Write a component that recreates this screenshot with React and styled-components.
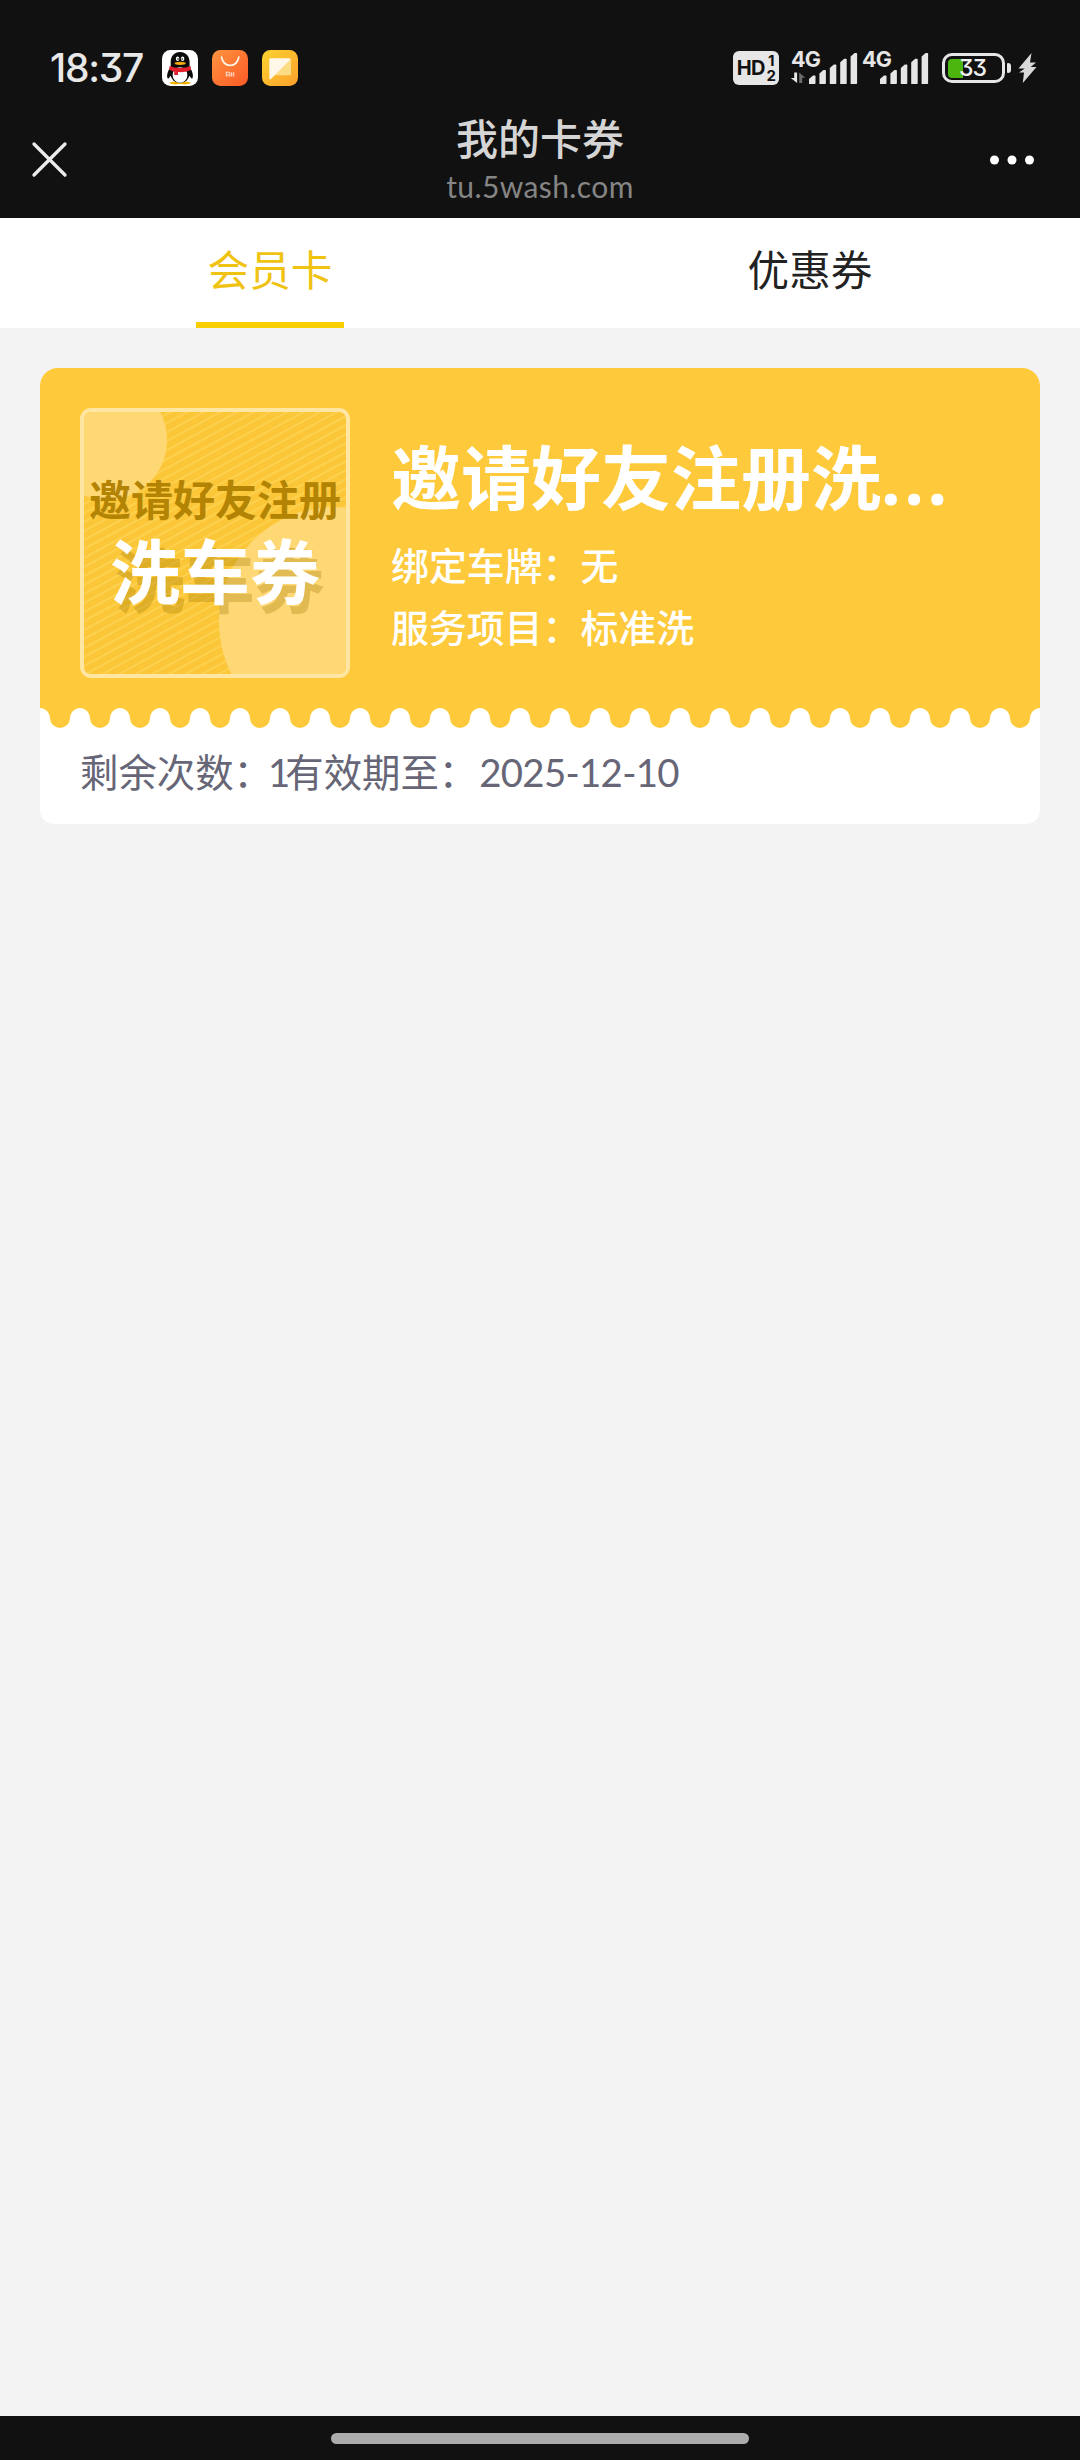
import React from "react";
import styled, { createGlobalStyle } from "styled-components";

const GlobalStyle = createGlobalStyle`
  *, *::before, *::after { box-sizing: border-box; }
  html, body { margin: 0; padding: 0; background: #f3f3f3; }
  body {
    font-family: Lato, "Noto Sans CJK SC", sans-serif;
    -webkit-font-smoothing: antialiased;
  }
`;

const Screen = styled.div`
  display: flex;
  flex-direction: column;
  width: 1080px;
  height: 2460px;
  overflow: hidden;
  background: #f3f3f3;
`;

const Header = styled.header`
  display: flex;
  flex-direction: column;
  height: 218px;
  background: #111;
`;

const StatusBar = styled.div`
  display: flex;
  align-items: center;
  justify-content: space-between;
  height: 106px;
  padding: 30px 43px 0 50px;
`;

const StatusGroup = styled.div`
  display: flex;
  align-items: center;
  height: 36px;
`;

const Clock = styled.div`
  width: 112px;
  font-family: Inter, sans-serif;
  font-size: 39px;
  font-weight: 500;
  line-height: 38px;
  letter-spacing: -1.3px;
  white-space: nowrap;
  font-feature-settings: "cv09";
  color: #e8e8e8;
`;

const AppIcons = styled.div`
  display: flex;
  gap: 14px;
`;

const Glyph = styled.svg`
  display: block;
  flex: none;
`;

const HdBadge = styled.div`
  display: flex;
  align-items: center;
  justify-content: center;
  width: 46px;
  height: 34px;
  margin-right: 11px;
  border-radius: 6px;
  background: #e6e6e6;
  color: #111;
  font-family: Inter, sans-serif;
  font-size: 20px;
  font-weight: 700;
  line-height: 34px;
  letter-spacing: -0.8px;
`;

const HdLines = styled.span`
  display: flex;
  flex-direction: column;
  align-items: center;
  margin-left: 2px;
  font-size: 15px;
  line-height: 15px;
`;

const Network = styled.div`
  display: flex;
  flex-direction: column;
  width: ${(p) => p.$width}px;
  height: 36px;
`;

const NetworkType = styled.span`
  height: 18px;
  padding-left: 1px;
  font-family: Inter, sans-serif;
  font-size: 21.5px;
  font-weight: 700;
  line-height: 18px;
  letter-spacing: -0.9px;
  color: #e6e6e6;
`;

const SignalCluster = styled.div`
  display: grid;
  width: ${(p) => p.$width}px;
  margin-right: ${(p) => p.$after}px;
  > * { grid-area: 1 / 1; }
`;

const Battery = styled.div`
  display: flex;
  align-items: center;
  width: 63px;
  height: 30px;
  padding: 0 3px;
  border: 3.5px solid #e6e6e6;
  border-radius: 10px;
`;

const BatteryFill = styled.div`
  width: 15px;
  height: 19px;
  border-radius: 4px 0 0 4px;
  background: #4cb50e;
`;

const BatteryLevel = styled.span`
  margin-left: -4px;
  font-family: Inter, sans-serif;
  font-size: 23px;
  font-weight: 500;
  line-height: 24px;
  letter-spacing: -0.9px;
  font-feature-settings: "cv09";
  color: #f0f0f0;
`;

const BatteryCap = styled.div`
  width: 4px;
  height: 10px;
  margin: 0 7px 0 2px;
  border-radius: 1px 3px 3px 1px;
  background: #e6e6e6;
`;

const NavBar = styled.div`
  display: grid;
  grid-template-columns: 100px 1fr 100px;
  height: 112px;
`;

const NavButton = styled.button`
  display: flex;
  align-items: center;
  justify-content: ${(p) => p.$side};
  height: 107px;
  padding: 0 44px 0 31px;
  border: 0;
  background: transparent;
`;

const NavTitle = styled.div`
  display: flex;
  flex-direction: column;
  align-items: center;
  padding-top: 7px;
`;

const PageName = styled.div`
  height: 56px;
  font-size: 42px;
  font-weight: 500;
  line-height: 52px;
  color: #d5d5d5;
`;

const PageHost = styled.div`
  height: 34px;
  font-size: 30px;
  line-height: 34px;
  letter-spacing: 0.4px;
  color: #858585;
`;

const Tabs = styled.nav`
  display: grid;
  grid-template-columns: 1fr 1fr;
  height: 110px;
  background: #fff;
`;

const Tab = styled.div`
  display: flex;
  align-items: center;
  justify-content: center;
  width: 148px;
  height: 110px;
  margin: 0 auto;
  border-bottom: 6px solid ${(p) => (p.$active ? "#fbce00" : "transparent")};
  font-size: 41.6px;
  line-height: 60px;
  white-space: nowrap;
  color: ${(p) => (p.$active ? "#f0c313" : "#222")};
`;

const Content = styled.main`
  flex: 1;
  padding: 40px;
`;

const Card = styled.article`
  display: flex;
  flex-direction: column;
  height: 456px;
  border-radius: 18px 18px 14px 14px;
  overflow: hidden;
  background: #fff;
`;

const CardTop = styled.div`
  display: flex;
  gap: 40px;
  height: 340px;
  padding: 40px 40px 30px;
  background: #fec93a;
`;

const Cover = styled.div`
  position: relative;
  display: flex;
  flex: none;
  flex-direction: column;
  align-items: center;
  width: 270px;
  height: 270px;
  padding-top: 60px;
  border: 4px solid #ffe6a3;
  border-radius: 11px;
  overflow: hidden;
  background: #fbc739;
`;

const CoverArt = styled.svg`
  position: absolute;
  inset: 0;
`;

const CoverCaption = styled.div`
  position: relative;
  height: 56px;
  font-size: 42px;
  font-weight: 700;
  line-height: 56px;
  white-space: nowrap;
  color: #b38304;
`;

const CoverTitle = styled.div`
  position: relative;
  height: 80px;
  margin-top: 4px;
  font-size: 70px;
  font-weight: 700;
  line-height: 80px;
  white-space: nowrap;
  color: #fff;
  text-shadow: 5px 9px 0 rgba(160, 115, 0, 0.3);
`;

const Info = styled.div`
  display: flex;
  flex-direction: column;
  min-width: 0;
  padding: 22px 0 0 1px;
  color: #fff;
`;

const InfoTitle = styled.h2`
  height: 96px;
  margin: 0 0 8px;
  font-size: 70px;
  font-weight: 700;
  line-height: 96px;
  white-space: nowrap;
`;

const Dots = styled.span`
  font-family: "Noto Sans", sans-serif;
  letter-spacing: 3.6px;
`;

const InfoRow = styled.div`
  height: 62px;
  font-size: 37.9px;
  font-weight: 500;
  line-height: 63px;
  white-space: nowrap;
`;

const Scallop = styled.svg`
  display: block;
  flex: none;
`;

const CardFooter = styled.div`
  display: flex;
  align-items: center;
  height: 88px;
  padding-left: 40px;
  font-size: 38.4px;
  line-height: 60px;
  white-space: nowrap;
  color: #666677;
`;

const Figures = styled.span`
  margin-left: ${(p) => p.$shift}px;
  letter-spacing: ${(p) => p.$tracking}px;
`;

const GestureBar = styled.footer`
  display: flex;
  align-items: center;
  justify-content: center;
  height: 44px;
  background: #111;
`;

const GesturePill = styled.div`
  width: 418px;
  height: 11px;
  border-radius: 6px;
  background: #acacac;
`;

function PenguinIcon() {
  return (
    <Glyph width="36" height="36" viewBox="0 0 36 36">
      <rect width="36" height="36" rx="8.5" fill="#fff" />
      <ellipse cx="13.5" cy="33" rx="5.8" ry="1.5" fill="#f5b400" />
      <ellipse cx="22.8" cy="33" rx="5.8" ry="1.5" fill="#f5b400" />
      <path d="M8.500 17C5.500 21.500 4.300 26 5.800 28.500c.8.500 1.900-1.300 2.500-2.500h19.500c.6 1.200 1.700 3 2.500 2.500 1.400-2.500.3-7-2.700-11.500z" fill="#0b0b0b" />
      <path d="M18 2c-5.600 0-9.300 4.300-9.300 10v7h18.900v-7C27.600 6.300 23.700 2 18 2z" fill="#0b0b0b" />
      <circle cx="18" cy="23.300" r="9.700" fill="#0b0b0b" />
      <ellipse cx="18" cy="25" rx="7.400" ry="7.800" fill="#fff" />
      <ellipse cx="15.600" cy="8.800" rx="1.700" ry="2.300" fill="#fff" />
      <ellipse cx="20.600" cy="8.800" rx="1.700" ry="2.300" fill="#fff" />
      <circle cx="16" cy="9" r="0.800" fill="#111" />
      <circle cx="20.300" cy="9" r="0.800" fill="#111" />
      <ellipse cx="18.200" cy="13.300" rx="5.600" ry="1.600" fill="#f4aa13" />
      <path d="M7.600 16c6 2.600 15 2.600 21 0l.4 4c-4.500 2-8.800 2.300-13 2.100v3h-3.800V21.400c-1.700-.3-3.400-.8-5-1.600z" fill="#e0202c" />
    </Glyph>
  );
}

function StoreIcon() {
  return (
    <Glyph width="36" height="36" viewBox="0 0 36 36">
      <defs>
        <linearGradient id="store" x1="0" y1="0" x2="1" y2="1">
          <stop offset="0" stopColor="#ff9440" />
          <stop offset="1" stopColor="#fb5a26" />
        </linearGradient>
      </defs>
      <rect width="36" height="36" rx="8.500" fill="url(#store)" />
      <path d="M9.500 7c1 5.300 4.300 8.300 8.700 8.300S25.800 12.300 26.800 7" fill="none" stroke="#fff3e6" strokeWidth="1.700" strokeLinecap="round" />
      <path d="M14.300 26.500v-4.200h2.400c.8 0 1.200.4 1.200 1.200v3M16.100 24v2.500M19.700 22.300v4.200M21.700 22.300v4.200" fill="none" stroke="#ffe0d0" strokeWidth="1.100" />
    </Glyph>
  );
}

function NotesIcon() {
  return (
    <Glyph width="36" height="36" viewBox="0 0 36 36">
      <defs>
        <linearGradient id="notes" x1="0" y1="0" x2="1" y2="1">
          <stop offset="0" stopColor="#fdd32f" />
          <stop offset="1" stopColor="#fba02d" />
        </linearGradient>
      </defs>
      <rect width="36" height="36" rx="8.500" fill="url(#notes)" />
      <path d="M29 8.500v15.300c0 1-.6 1.500-1.500 1.500H11.500z" fill="#fddc86" />
      <path d="M8 8.300h19.500c.8 0 1.200.9.600 1.500L9 29c-.7.600-1.700.2-1.700-.7V9c0-.4.300-.7.700-.7z" fill="#fff8e8" />
    </Glyph>
  );
}

const BAR_TOPS = [25.500, 20, 14.500, 8.800, 3];

function SignalBars({ start, width, activity }) {
  return (
    <Glyph width={width} height="36" viewBox={`0 0 ${width} 36`}>
      {activity && (
        <>
          <path d="M4.200 22.500h2.900V33L0.800 27.900h3.400z" fill="#e6e6e6" />
          <path d="M9.200 33V22.500l6 5.300h-3V33z" fill="#6c6c6c" />
        </>
      )}
      {BAR_TOPS.map((top, i) => {
        const x = start + i * 10.400;
        return (
          <path
            key={top}
            d={`M${x} 34V${top + 3.500}L${x + 4} ${top}h1.700q.8 0 .8 .8V33.200q0 .8-.8 .8z`}
            fill="#e6e6e6"
          />
        );
      })}
    </Glyph>
  );
}

function Signal({ start, width, after, activity }) {
  return (
    <SignalCluster $width={width} $after={after}>
      <Network $width={width}>
        <NetworkType>4G</NetworkType>
      </Network>
      <SignalBars start={start} width={width} activity={activity} />
    </SignalCluster>
  );
}

function ChargeIcon() {
  return (
    <Glyph width="19" height="30" viewBox="0 0 19 30">
      <path d="M13.500 0L.5 15.500h6.300L1 19.500h5L4.800 30 18.500 14h-5.800L18 9.500h-6z" fill="#d9d9d9" />
    </Glyph>
  );
}

function CoverBackdrop() {
  const lines = Array.from({ length: 46 }, (_, i) => i * 9 + 2);
  return (
    <CoverArt width="262" height="262" viewBox="0 0 262 262">
      {lines.map((y) => (
        <line key={y} x1="0" y1={y} x2="262" y2={y - 142} stroke="#fdd04e" strokeWidth="2" />
      ))}
      <circle cx="23" cy="28" r="60" fill="#ffd876" />
      <circle cx="250" cy="210" r="115" fill="#ffd876" />
    </CoverArt>
  );
}

function ScallopEdge() {
  const teeth = "a10 10 0 0 1 10 10a10 10 0 0 0 20 0a10 10 0 0 1 10 -10".repeat(25);
  return (
    <Scallop width="1000" height="20" viewBox="0 0 1000 20">
      <path d={`M0 0${teeth}z`} fill="#fec93a" />
    </Scallop>
  );
}

export default function App() {
  return (
    <Screen>
      <GlobalStyle />
      <Header>
        <StatusBar>
          <StatusGroup>
            <Clock>18:37</Clock>
            <AppIcons>
              <PenguinIcon />
              <StoreIcon />
              <NotesIcon />
            </AppIcons>
          </StatusGroup>
          <StatusGroup>
            <HdBadge>
              HD
              <HdLines>
                <span>1</span>
                <span>2</span>
              </HdLines>
            </HdBadge>
            <Signal start={19} width={68} after={3} activity />
            <Signal start={19} width={68} after={13} />
            <Battery>
              <BatteryFill />
              <BatteryLevel>33</BatteryLevel>
            </Battery>
            <BatteryCap />
            <ChargeIcon />
          </StatusGroup>
        </StatusBar>
        <NavBar>
          <NavButton $side="flex-start" aria-label="关闭">
            <Glyph width="37" height="37" viewBox="0 0 37 37">
              <path d="M3 3l31 31M34 3l-31 31" stroke="#ececec" strokeWidth="3.300" strokeLinecap="round" />
            </Glyph>
          </NavButton>
          <NavTitle>
            <PageName>我的卡券</PageName>
            <PageHost>tu.5wash.com</PageHost>
          </NavTitle>
          <NavButton $side="flex-end" aria-label="更多">
            <Glyph width="48" height="10" viewBox="0 0 48 10">
              <circle cx="6.500" cy="5" r="4.500" fill="#fff" />
              <circle cx="24" cy="5" r="4.500" fill="#fff" />
              <circle cx="41.500" cy="5" r="4.500" fill="#fff" />
            </Glyph>
          </NavButton>
        </NavBar>
      </Header>
      <Tabs>
        <Tab $active>会员卡</Tab>
        <Tab>优惠券</Tab>
      </Tabs>
      <Content>
        <Card>
          <CardTop>
            <Cover>
              <CoverBackdrop />
              <CoverCaption>邀请好友注册</CoverCaption>
              <CoverTitle>洗车券</CoverTitle>
            </Cover>
            <Info>
              <InfoTitle>
                邀请好友注册洗<Dots>...</Dots>
              </InfoTitle>
              <InfoRow>绑定车牌：无</InfoRow>
              <InfoRow>服务项目：标准洗</InfoRow>
            </Info>
          </CardTop>
          <ScallopEdge />
          <CardFooter>
            剩余次数：<Figures $shift={-4} $tracking={-5}>1</Figures>有效期至：
            <Figures $shift={2} $tracking={-0.7}>2025-12-10</Figures>
          </CardFooter>
        </Card>
      </Content>
      <GestureBar>
        <GesturePill />
      </GestureBar>
    </Screen>
  );
}
